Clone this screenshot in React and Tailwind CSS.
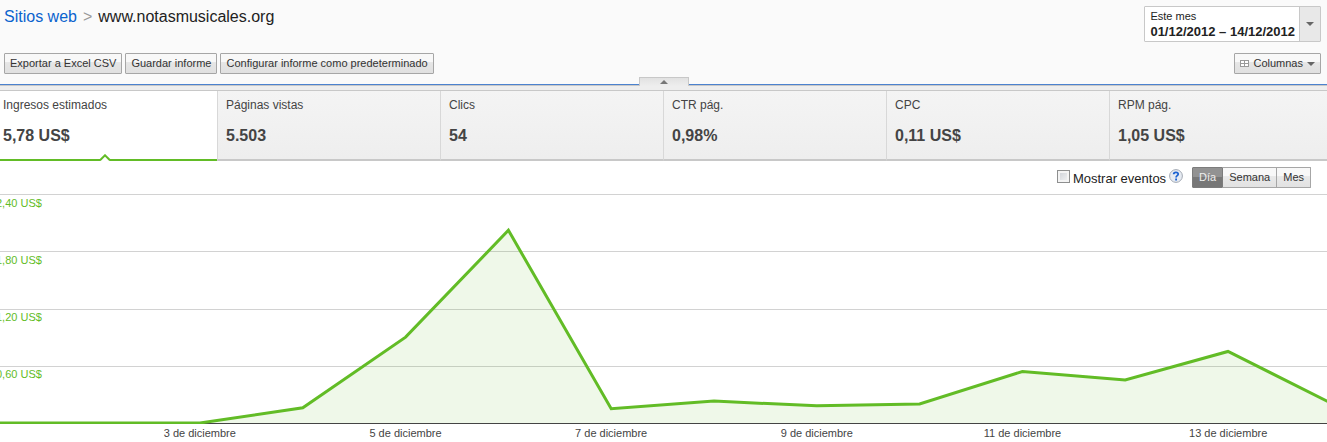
import React, { useState } from "react";

const metrics = [
  { id: "ingresos", label: "Ingresos estimados", value: "5,78 US$" },
  { id: "paginas", label: "Páginas vistas", value: "5.503" },
  { id: "clics", label: "Clics", value: "54" },
  { id: "ctr", label: "CTR pág.", value: "0,98%" },
  { id: "cpc", label: "CPC", value: "0,11 US$" },
  { id: "rpm", label: "RPM pág.", value: "1,05 US$" },
];

const periods = ["Día", "Semana", "Mes"];
const scale = ["2,40 US$", "1,80 US$", "1,20 US$", "0,60 US$"];
const gridLines = [0, 57, 115, 172];
const days = [3, 5, 7, 9, 11, 13];

// daily income, 1 to 14 december
const income = [
  0, 0, 0, 0.16, 0.9, 2.02, 0.15, 0.23, 0.18, 0.2, 0.54, 0.45, 0.75, 0.21,
];
const points = income
  .map((amount, i) => `${200 + (i - 2) * 102.8},${229 - amount * 95.4}`)
  .join(" ");

const buttonStyle =
  "h-[21px] px-[5px] rounded-[1px] border border-[#a6a6a6] bg-linear-to-b from-[#f8f8f8] from-40% via-[#e6e6e6] via-45% to-[#e0e0e0] text-[11px] leading-[19px] text-[#333] whitespace-nowrap cursor-pointer";

function Arrow() {
  return (
    <svg width="8" height="4" viewBox="0 0 8 4" aria-hidden="true">
      <path d="M0 0h8L4 4z" fill="#666" />
    </svg>
  );
}

function Header() {
  return (
    <header className="bg-[#fafafa] h-[84px] pl-1 pr-[6px] pt-[6px] flex flex-col justify-between pb-[10px]">
      <div className="flex justify-between items-start">
        <h1 className="text-base leading-[22px] flex gap-[6px] text-[#222]">
          <a href="#sitios" className="text-[#0b63ce]">
            Sitios web
          </a>
          <span className="text-[#999]">&gt;</span>
          <span>www.notasmusicales.org</span>
        </h1>
        <button
          type="button"
          className="flex h-9 rounded-[1px] border border-[#c8c8c8] bg-white text-left text-[#222] cursor-pointer"
        >
          <span className="flex flex-col pl-[5px] pr-1 pt-[2px]">
            <span className="text-[11px] leading-[15px]">Este mes</span>
            <span className="text-[13px] leading-[15px] font-bold">
              01/12/2012 – 14/12/2012
            </span>
          </span>
          <span className="w-[21px] self-stretch flex items-center justify-center border-l border-[#c8c8c8] bg-[#e8e8e8]">
            <Arrow />
          </span>
        </button>
      </div>
      <div className="flex justify-between">
        <div className="flex gap-[3px]">
          <button type="button" className={buttonStyle}>
            Exportar a Excel CSV
          </button>
          <button type="button" className={buttonStyle}>
            Guardar informe
          </button>
          <button type="button" className={buttonStyle}>
            Configurar informe como predeterminado
          </button>
        </div>
        <button
          type="button"
          className={`${buttonStyle} flex items-center gap-1`}
        >
          <svg width="9" height="7" viewBox="0 0 9 7" aria-hidden="true">
            <path d="M0 0h9v7H0z" fill="#999" />
            <path d="M1 1h3v2H1zM5 1h3v2H5zM1 4h3v2H1zM5 4h3v2H5z" fill="#fff" />
          </svg>
          Columnas
          <Arrow />
        </button>
      </div>
    </header>
  );
}

function Metrics({ active, onSelect }) {
  return (
    <div className="relative border-t border-[#4b82cf]">
      <button
        type="button"
        aria-label="Ocultar encabezado"
        className="absolute left-1/2 -top-2 -ml-[25px] w-[50px] h-[9px] flex justify-center items-center border border-b-0 border-[#c8c8c8] bg-linear-to-b from-[#e2e2e2] to-[#eee] cursor-pointer"
      >
        <svg width="8" height="4" viewBox="0 0 8 4" aria-hidden="true">
          <path d="M0 4h8L4 0z" fill="#777" />
        </svg>
      </button>
      <div className="h-[6px] border-t border-b border-[#c8c8c8] bg-[#eee]"></div>
      <div className="overflow-hidden">
        <div className="grid grid-cols-6 -ml-[6px] -mr-[5px]">
          {metrics.map((metric) => (
            <button
              key={metric.id}
              type="button"
              onClick={() => onSelect(metric.id)}
              className={`relative h-[70px] flex flex-col gap-[13px] pl-2 pt-[5px] text-left text-[#444] border-l border-b-2 border-l-[#d8d8d8] cursor-pointer ${
                active === metric.id
                  ? "bg-white border-b-[#62bc26]"
                  : "bg-linear-to-b from-[#f4f4f4] to-[#eee] border-b-[#c8c8c8]"
              }`}
            >
              <span className="text-xs leading-[18px]">{metric.label}</span>
              <span className="text-base leading-[18px] font-bold">
                {metric.value}
              </span>
              {active === metric.id && (
                <svg
                  className="absolute left-1/2 -ml-[7px] -bottom-[2px]"
                  width="12"
                  height="7"
                  viewBox="0 0 12 7"
                  aria-hidden="true"
                >
                  <path d="M1 7l5-5 5 5z" fill="#fff" />
                  <path d="M1 6.3l5-5 5 5" fill="none" stroke="#62bc26" strokeWidth="2" />
                </svg>
              )}
            </button>
          ))}
        </div>
      </div>
    </div>
  );
}

function Options({ period, onPeriod }) {
  const [events, setEvents] = useState(false);

  return (
    <div className="h-[33px] pt-[6px] pr-4 flex justify-end items-start">
      <input
        id="eventos"
        type="checkbox"
        checked={events}
        onChange={(e) => {
          setEvents(e.target.checked);
        }}
        className="appearance-none size-[13px] mt-[3px] mr-[3px] border border-[#8e8f8f] bg-linear-to-br from-[#cbcfd5] to-[#f6f6f6] shadow-[inset_0_0_0_2px_#f4f4f4] checked:bg-[#555]"
      />
      <label htmlFor="eventos" className="text-[13px] leading-6 text-[#222]">
        Mostrar eventos
      </label>
      <button type="button" aria-label="Ayuda" className="mt-[2px] ml-[3px] mr-[9px] cursor-pointer">
        <svg width="14" height="14" viewBox="0 0 14 14" className="block">
          <circle cx="7" cy="7" r="6.4" fill="#e6ebf2" stroke="#a3a9b3" />
          <path
            d="M4.7 5.2C4.7 2.7 9.2 2.7 9.2 5 9.2 6.7 7.1 6.6 7.1 8.5M7.1 9.6v1.9"
            fill="none"
            stroke="#1c62d1"
            strokeWidth="1.8"
          />
        </svg>
      </button>
      <div className="flex">
        {periods.map((name) => (
          <button
            key={name}
            type="button"
            onClick={() => onPeriod(name)}
            className={`h-[21px] px-[6px] border border-l-0 first:border-l first:rounded-l-[1px] last:rounded-r-[1px] text-[11px] leading-[19px] cursor-pointer bg-linear-to-b ${
              period === name
                ? "from-[#929292] from-45% to-[#777] to-50% border-[#7c7c7c] text-[#eee]"
                : "from-[#f8f8f8] from-40% via-[#e9e9e9] via-45% to-[#e2e2e2] border-[#a6a6a6] text-[#333]"
            }`}
          >
            {name}
          </button>
        ))}
      </div>
    </div>
  );
}

function Chart() {
  return (
    <div>
      <div className="relative h-[230px]">
        <svg
          className="block w-full h-full overflow-hidden"
          viewBox="0 0 1327 230"
          preserveAspectRatio="none"
          role="img"
          aria-label="Ingresos estimados por día"
        >
          {gridLines.map((y) => (
            <rect key={y} x="0" y={y} width="1327" height="1" fill="#d2d2d2" />
          ))}
          <rect x="0" y="229" width="1327" height="1" fill="#444" />
          <polygon
            points={`${points} 1331,229 -6,229`}
            fill="#62bc26"
            fillOpacity="0.1"
          />
          <polyline
            points={points}
            fill="none"
            stroke="#62bc26"
            strokeWidth="3"
            vectorEffect="non-scaling-stroke"
          />
        </svg>
        <div className="absolute top-0 -left-1 flex flex-col text-[11px] leading-[18px] text-[#62bc26]">
          {scale.map((label) => (
            <span key={label} className="h-[57px]">
              {label}
            </span>
          ))}
        </div>
      </div>
      <div className="grid grid-cols-6 ml-[97px] -mr-1 text-center text-[11px] leading-[18px] text-[#444]">
        {days.map((day) => (
          <span key={day}>{day} de diciembre</span>
        ))}
      </div>
    </div>
  );
}

function App() {
  const [active, setActive] = useState("ingresos");
  const [period, setPeriod] = useState("Día");

  return (
    <div className="bg-white overflow-hidden font-['Liberation_Sans',Arial,sans-serif]">
      <Header />
      <Metrics active={active} onSelect={setActive} />
      <Options period={period} onPeriod={setPeriod} />
      <Chart />
    </div>
  );
}

export default App;
